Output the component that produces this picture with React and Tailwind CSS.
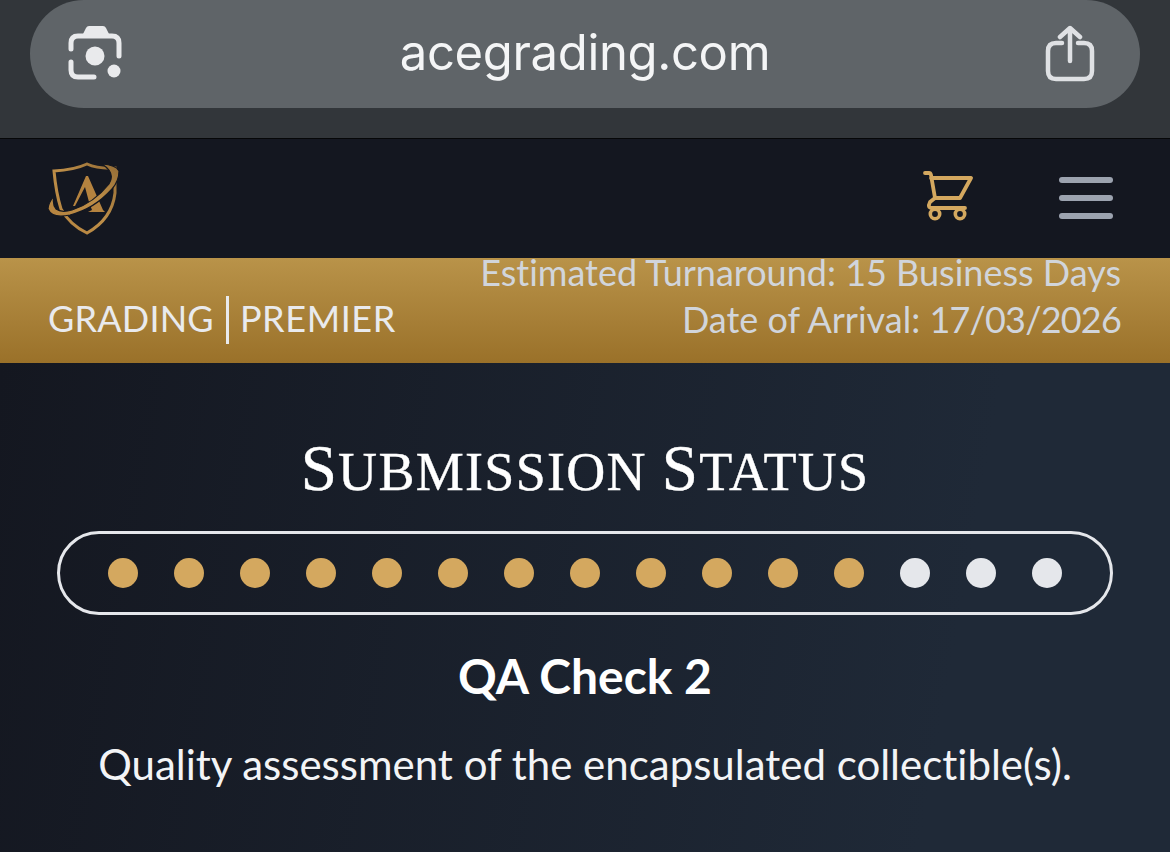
import React from "react";

const Lens = () => (
  <svg width="58" height="58" viewBox="0 0 58 58" fill="none" className="block">
    <path d="M16 9 L19 3 Q20 1 22 1 H36 Q38 1 39 3 L42 9 Z" fill="#e9eaec" />
    <path d="M4 24 V18 Q4 11 11 11 H45 Q52 11 52 18 V31" stroke="#e9eaec" strokeWidth="5" strokeLinecap="round" />
    <path d="M4 37 V45 Q4 52 11 52 H27" stroke="#e9eaec" strokeWidth="5" strokeLinecap="round" />
    <circle cx="28" cy="31" r="9.500" fill="#e9eaec" />
    <circle cx="47" cy="46" r="6.500" fill="#e9eaec" />
  </svg>
);

const Share = () => (
  <svg width="50" height="58" viewBox="0 0 50 58" fill="none" className="block">
    <path d="M17 18 H11 Q3 18 3 26 V46 Q3 54 11 54 H39 Q47 54 47 46 V26 Q47 18 39 18 H33" stroke="#dfe1e4" strokeWidth="4.500" strokeLinecap="round" />
    <path d="M25 36 V4 M15 12 L25 3 L35 12" stroke="#dfe1e4" strokeWidth="4.500" strokeLinecap="round" strokeLinejoin="round" />
  </svg>
);

const Cart = () => (
  <svg width="50" height="50" viewBox="0 0 50 50" fill="none" className="block">
    <path d="M2 2 H6 Q7.500 2 8 4 L12 27 H37 L48 7 H8" stroke="#d4a85f" strokeWidth="3.800" strokeLinejoin="round" strokeLinecap="round" />
    <path d="M12 27 L7 31 Q4 37 9 37 H42" stroke="#d4a85f" strokeWidth="3.800" strokeLinecap="round" strokeLinejoin="round" />
    <circle cx="12" cy="43" r="4.700" stroke="#d4a85f" strokeWidth="3.600" />
    <circle cx="37" cy="43" r="4.700" stroke="#d4a85f" strokeWidth="3.600" />
  </svg>
);

const Logo = () => (
  <svg width="72" height="74" viewBox="0 0 72 72" fill="none" className="block">
    <defs>
      <linearGradient id="g" x1="0" y1="1" x2="1" y2="0">
        <stop offset="0" stopColor="#b5833f" />
        <stop offset="0.5" stopColor="#bd8e48" />
        <stop offset="1" stopColor="#946c35" />
      </linearGradient>
    </defs>
    <path d="M6 8 Q26 7 39 1 Q50 6 67 5 V30 Q64 56 39 70 Q22 62 13 46 Q8 30 6 8 Z" stroke="url(#g)" strokeWidth="3" fill="none" />
    <path d="M38 13 H40 L55 47 L57 49 H40 L44 47 L41 39 L37 24 L27 43 L25 43 Z" fill="#b5833f" />
    <path d="M0 46 Q0 40 6 33 Q4 41 8 46 Q13 50 24 47 Q46 40 61 21 Q68 10 54 1 Q68 2 71 8 Q71 18 64 26 Q46 46 22 52 Q4 56 0 46 Z" fill="url(#g)" stroke="#141720" strokeWidth="1.200" />
  </svg>
);

const colors = Array.from({ length: 15 }, (_, i) => i < 12);

export default function App() {
  return (
    <div className="w-[1170px] h-[852px] overflow-hidden flex flex-col bg-[#141720] font-['Lato',sans-serif] [font-variant-ligatures:none]">
      <div className="h-[139px] shrink-0 bg-[#32363a] border-b border-[#060708] px-[30px]">
        <div className="h-[108px] rounded-[54px] bg-[#5f6468] flex items-center justify-between pl-[37px] pr-[45px]">
          <Lens />
          <span className="font-['Inter',sans-serif] text-[49px] leading-none text-[#f4f5f6] tracking-[-0.35px] mb-[4px]">acegrading.com</span>
          <Share />
        </div>
      </div>

      <div className="h-[119px] shrink-0 bg-[#141720] flex items-center justify-between pl-[48px] pr-[57px]">
        <Logo />
        <div className="flex items-center gap-[86px]">
          <div className="mb-[6px]"><Cart /></div>
          <div className="flex flex-col gap-[12px] w-[54px] mb-[1px]">
            <div className="h-[6px] rounded-full bg-[#9ca3af]" />
            <div className="h-[6px] rounded-full bg-[#9ca3af]" />
            <div className="h-[6px] rounded-full bg-[#9ca3af]" />
          </div>
        </div>
      </div>

      <div className="h-[105px] shrink-0 bg-gradient-to-b from-[#b99349] to-[#9a7129] flex items-end justify-between pl-[48px] pr-[49px] pb-[19px]">
        <div className="flex items-center text-[36px] leading-[48px] font-normal text-[#e9eaed] tracking-[0.2px]">
          <span>GRADING</span>
          <span className="w-[3px] h-[48px] bg-[#e9eaed] ml-[12px] mr-[11px] mt-[4px]" />
          <span className="tracking-[0.6px]">PREMIER</span>
        </div>
        <div className="text-right text-[36px] leading-[47px] text-[#d1d5db] font-normal mb-[1px]">
          <div>Estimated Turnaround: 15 Business Days</div>
          <div>Date of Arrival: <span className="tracking-[-0.8px]">17/03/2026</span></div>
        </div>
      </div>

      <div className="flex-1 bg-[linear-gradient(100deg,#141720_0%,#1f2937_80%)] flex flex-col items-center pt-[67px]">
        <h1 className="h-[76px] font-['Liberation_Serif',serif] leading-[76px] text-white tracking-[1.3px] [-webkit-text-stroke:0.4px_white] font-normal">
          <span className="text-[65px]">S</span>
          <span className="text-[54px] uppercase">ubmission</span>
          <span className="text-[54px]"> </span>
          <span className="text-[65px]">S</span>
          <span className="text-[54px] uppercase">tatus</span>
        </h1>
        <div className="mt-[25px] w-[1056px] h-[84px] rounded-full border-[3px] border-[#e5e7eb] flex items-center justify-between px-[48px]">
          {colors.map((gold, i) => (
            <div key={i} className={`w-[30px] h-[30px] rounded-full ${gold ? "bg-[#d4a85f]" : "bg-[#e5e7eb]"}`} />
          ))}
        </div>
        <div className="mt-[31px] text-[48px] leading-[60px] font-bold text-white">QA Check 2</div>
        <p className="mt-[33px] text-[42px] leading-[50px] text-[#f3f4f6]">Quality assessment of the encapsulated collectible(s).</p>
      </div>
    </div>
  );
}
